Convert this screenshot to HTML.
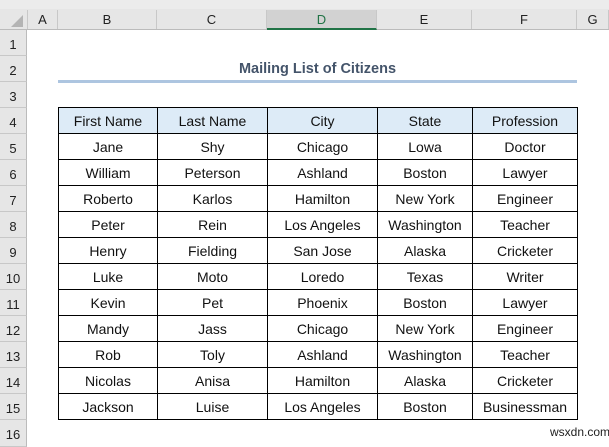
<!DOCTYPE html><html><head><style>
html,body{margin:0;width:609px;height:447px;overflow:hidden}
body{background:#fff;font-family:"Liberation Sans",sans-serif;position:relative}
.a{position:absolute}
.ch{position:absolute;top:10px;height:19px;border-right:1px solid #c8c8c8;background:#e6e6e6;font-size:13px;color:#222;text-align:center;line-height:19px;box-sizing:border-box}
.rh{position:absolute;left:0;width:27px;height:26px;border-bottom:1px solid #c8c8c8;border-right:1px solid #bbb;background:#e6e6e6;font-size:13px;color:#222;text-align:center;line-height:30px;box-sizing:border-box}
table{position:absolute;left:58px;top:107px;border-collapse:collapse;font-size:14px;color:#111}
td{border:1px solid #000;height:26px;padding:0;text-align:center;box-sizing:border-box;line-height:24px}
tr.h td{background:#ddebf7}
</style></head><body>
<div class="a" style="left:0;top:0;width:609px;height:30px;background:#e6e6e6;border-bottom:1px solid #bbb;box-sizing:border-box"></div>
<div class="a" style="left:0;top:0;width:609px;height:9px;background:#ececec"></div>
<svg class="a" style="left:10px;top:14px" width="14" height="14"><polygon points="13,1 13,13 1,13" fill="#b4b4b4"/></svg>
<div class="ch" style="left:27px;width:31px;border-left:1px solid #c8c8c8">A</div>
<div class="ch" style="left:58px;width:99px">B</div>
<div class="ch" style="left:157px;width:110px">C</div>
<div class="ch" style="left:267px;width:110px;background:#d2d2d2;color:#217346;border-bottom:2px solid #217346;height:20px">D</div>
<div class="ch" style="left:377px;width:95px">E</div>
<div class="ch" style="left:472px;width:105px">F</div>
<div class="ch" style="left:577px;width:32px">G</div>
<div class="rh" style="top:30px">1</div><div class="rh" style="top:56px">2</div><div class="rh" style="top:82px">3</div><div class="rh" style="top:108px">4</div><div class="rh" style="top:134px">5</div><div class="rh" style="top:160px">6</div><div class="rh" style="top:186px">7</div><div class="rh" style="top:212px">8</div><div class="rh" style="top:238px">9</div><div class="rh" style="top:264px">10</div><div class="rh" style="top:290px">11</div><div class="rh" style="top:316px">12</div><div class="rh" style="top:342px">13</div><div class="rh" style="top:368px">14</div><div class="rh" style="top:394px">15</div><div class="rh" style="top:420px;height:27px">16</div>
<div class="a" style="left:58px;top:61px;width:519px;text-align:center;font-weight:bold;font-size:14.5px;color:#44546a">Mailing List of Citizens</div>
<div class="a" style="left:58px;top:80px;width:519px;height:3px;background:#adc5e0"></div>
<table>
<colgroup><col style="width:99px"><col style="width:110px"><col style="width:110px"><col style="width:95px"><col style="width:105px"></colgroup>
<tr class="h"><td>First Name</td><td>Last Name</td><td>City</td><td>State</td><td>Profession</td></tr>
<tr><td>Jane</td><td>Shy</td><td>Chicago</td><td>Lowa</td><td>Doctor</td></tr>
<tr><td>William</td><td>Peterson</td><td>Ashland</td><td>Boston</td><td>Lawyer</td></tr>
<tr><td>Roberto</td><td>Karlos</td><td>Hamilton</td><td>New York</td><td>Engineer</td></tr>
<tr><td>Peter</td><td>Rein</td><td>Los Angeles</td><td>Washington</td><td>Teacher</td></tr>
<tr><td>Henry</td><td>Fielding</td><td>San Jose</td><td>Alaska</td><td>Cricketer</td></tr>
<tr><td>Luke</td><td>Moto</td><td>Loredo</td><td>Texas</td><td>Writer</td></tr>
<tr><td>Kevin</td><td>Pet</td><td>Phoenix</td><td>Boston</td><td>Lawyer</td></tr>
<tr><td>Mandy</td><td>Jass</td><td>Chicago</td><td>New York</td><td>Engineer</td></tr>
<tr><td>Rob</td><td>Toly</td><td>Ashland</td><td>Washington</td><td>Teacher</td></tr>
<tr><td>Nicolas</td><td>Anisa</td><td>Hamilton</td><td>Alaska</td><td>Cricketer</td></tr>
<tr><td>Jackson</td><td>Luise</td><td>Los Angeles</td><td>Boston</td><td>Businessman</td></tr>
</table>
<div class="a" style="left:550px;top:425px;font-size:12px;color:#222">wsxdn.com</div>
</body></html>
